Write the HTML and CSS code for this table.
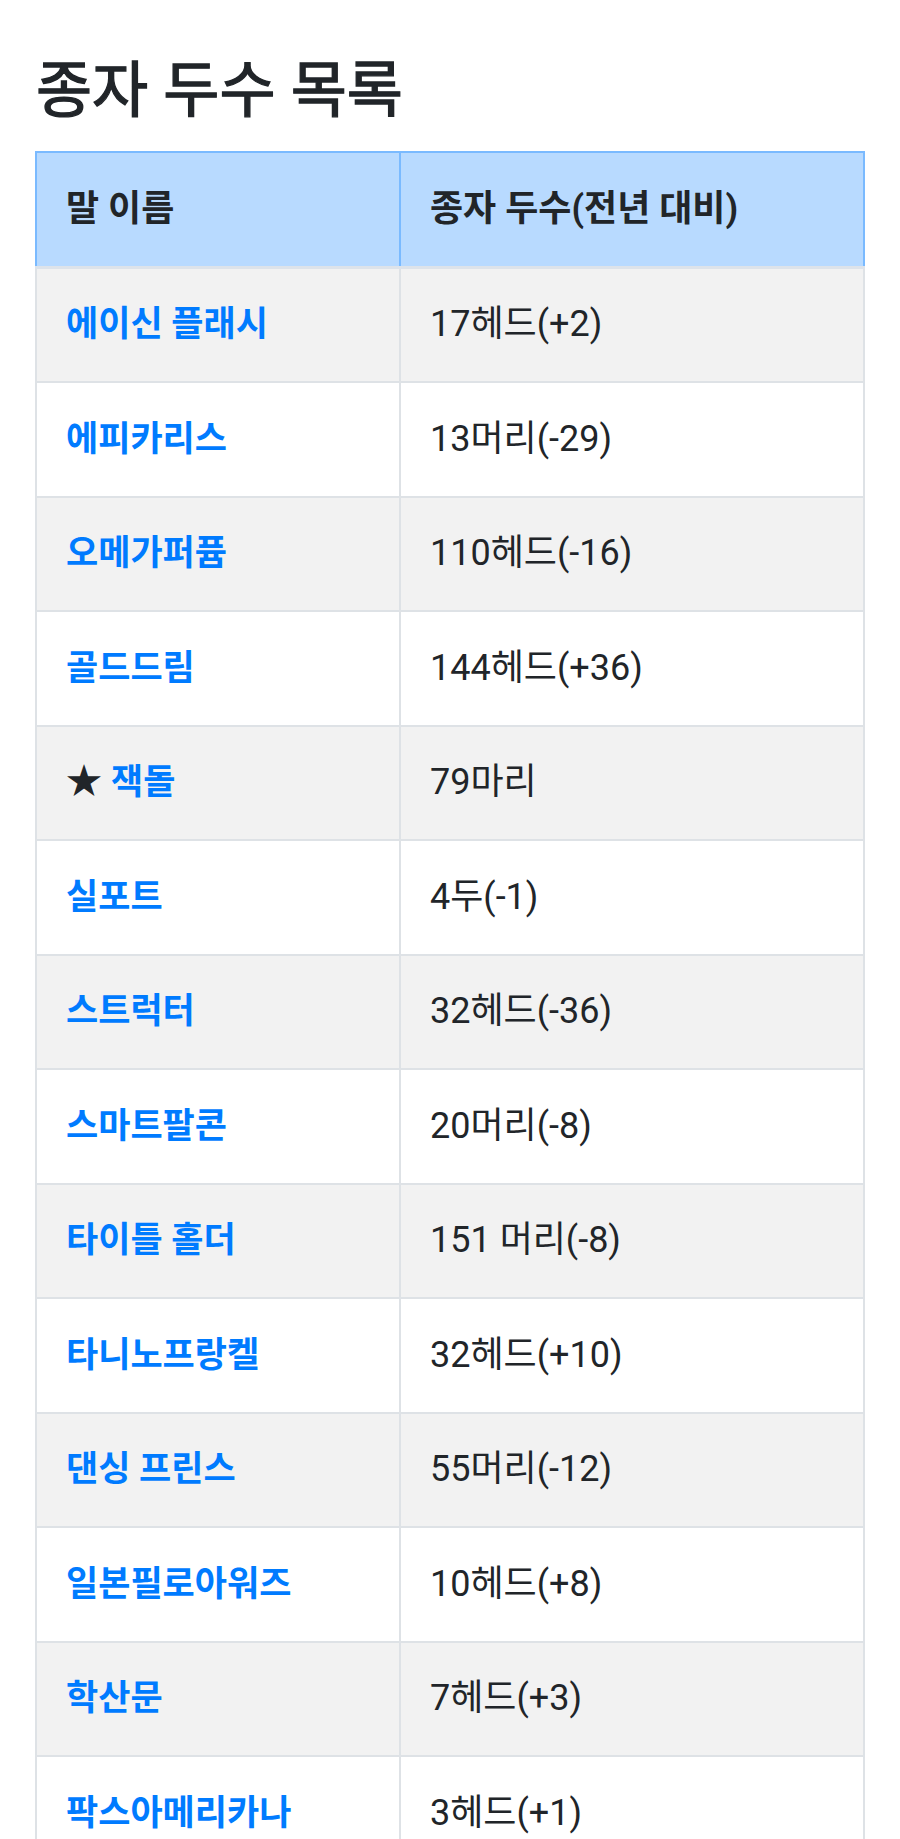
FILE: index.html
```html
<!DOCTYPE html>
<html lang="ko">
<head>
<meta charset="utf-8">
<title>종자 두수 목록</title>
<link rel="stylesheet" href="styles.css">
</head>
<body>
<main class="page">
  <h2 class="title">종자 두수 목록</h2>
  <table class="sires">
    <thead>
      <tr class="head-row">
        <th class="col-name">말 이름</th>
        <th class="col-count">종자 두수(전년 대비)</th>
      </tr>
    </thead>
    <tbody>
      <tr><td><a class="horse" href="#">에이신 플래시</a></td><td>17헤드(+2)</td></tr>
      <tr><td><a class="horse" href="#">에피카리스</a></td><td>13머리(-29)</td></tr>
      <tr><td><a class="horse" href="#">오메가퍼퓸</a></td><td>110헤드(-16)</td></tr>
      <tr><td><a class="horse" href="#">골드드림</a></td><td>144헤드(+36)</td></tr>
      <tr><td><span class="star">★</span> <a class="horse" href="#">잭돌</a></td><td>79마리</td></tr>
      <tr><td><a class="horse" href="#">실포트</a></td><td>4두(-1)</td></tr>
      <tr><td><a class="horse" href="#">스트럭터</a></td><td>32헤드(-36)</td></tr>
      <tr><td><a class="horse" href="#">스마트팔콘</a></td><td>20머리(-8)</td></tr>
      <tr><td><a class="horse" href="#">타이틀 홀더</a></td><td>151 머리(-8)</td></tr>
      <tr><td><a class="horse" href="#">타니노프랑켈</a></td><td>32헤드(+10)</td></tr>
      <tr><td><a class="horse" href="#">댄싱 프린스</a></td><td>55머리(-12)</td></tr>
      <tr><td><a class="horse" href="#">일본필로아워즈</a></td><td>10헤드(+8)</td></tr>
      <tr><td><a class="horse" href="#">학산문</a></td><td>7헤드(+3)</td></tr>
      <tr><td><a class="horse" href="#">팍스아메리카나</a></td><td>3헤드(+1)</td></tr>
    </tbody>
  </table>
</main>
</body>
</html>
```
FILE: styles.css
```css
html, body {
  margin: 0;
  padding: 0;
  background: #ffffff;
}

body {
  font-family: Roboto, "Noto Sans CJK KR", sans-serif;
  font-size: 36px;
  color: #212529;
}

.page {
  padding: 55px 35px 0 35px;
}

.title {
  margin: 0 0 24px 1px;
  font-size: 61px;
  line-height: 72px;
  font-weight: 400;
  -webkit-text-stroke: 1.3px #212529;
  color: #212529;
}

.sires {
  width: 830px;
  border-collapse: collapse;
  table-layout: fixed;
}

.sires th,
.sires td {
  border: 2px solid #dee2e6;
  padding: 28.75px 29px;
  line-height: 55px;
  text-align: left;
  vertical-align: middle;
  white-space: nowrap;
}

.col-name {
  width: 304px;
}

.head-row th {
  background: #b8daff;
  border-color: #7abaff;
  border-bottom: 3px solid #dde3ea;
  font-weight: 700;
}

.sires tbody tr:nth-child(odd) td {
  background: #f2f2f2;
}

.horse {
  color: #007bff;
  font-weight: 700;
  font-size: 35px;
  text-decoration: none;
}

.star {
  color: #212529;
}
```
